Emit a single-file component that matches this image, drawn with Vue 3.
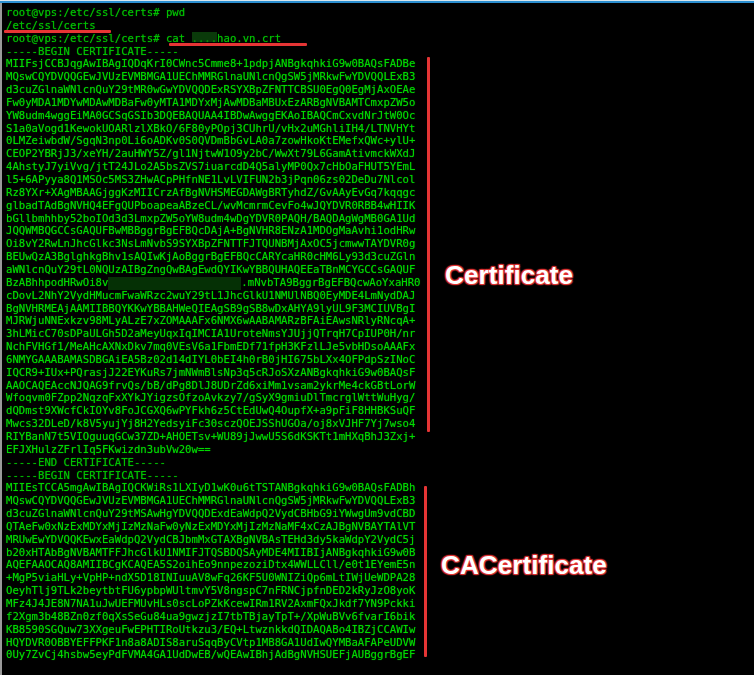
<script setup>
const before = [
  'MIIFsjCCBJqgAwIBAgIQDqKrI0CWnc5Cmme8+1pdpjANBgkqhkiG9w0BAQsFADBe',
  'MQswCQYDVQQGEwJVUzEVMBMGA1UEChMMRGlnaUNlcnQgSW5jMRkwFwYDVQQLExB3',
  'd3cuZGlnaWNlcnQuY29tMR0wGwYDVQQDExRSYXBpZFNTTCBSU0EgQ0EgMjAxOEAe',
  'Fw0yMDA1MDYwMDAwMDBaFw0yMTA1MDYxMjAwMDBaMBUxEzARBgNVBAMTCmxpZW5o',
  'YW8udm4wggEiMA0GCSqGSIb3DQEBAQUAA4IBDwAwggEKAoIBAQCmCxvdNrJtW0Oc',
  'S1a0aVogd1KewokUOARlzlXBkO/6F80yPOpj3CUhrU/vHx2uMGhliIH4/LTNVHYt',
  '0LMZeiwbdW/SgqN3np0Li6oADKv0S0QVDmBbGvLA0a7zowHkoKtEMefxQWc+ylU+',
  'CEOP2YBRjJ3/xeYH/2auHWY5Z/gl1NjtwW1O9y2bC/WwXt79L6GamAtivmckWXdJ',
  '4AhstyJ7yiVvg/jtT24JLo2A5bsZVS7iuarcdD4Q5alyMP0Qx7cHbOaFHUT5YEmL',
  'l5+6APyya8Q1MSOc5MS3ZHwACpPHfnNE1LvLVIFUN2b3jPqn06zs02DeDu7Nlcol',
  'Rz8YXr+XAgMBAAGjggKzMIICrzAfBgNVHSMEGDAWgBRTyhdZ/GvAAyEvGq7kqqgc',
  'glbadTAdBgNVHQ4EFgQUPboapeaABzeCL/wvMcmrmCevFo4wJQYDVR0RBB4wHIIK',
  'bGllbmhhby52boIOd3d3LmxpZW5oYW8udm4wDgYDVR0PAQH/BAQDAgWgMB0GA1Ud',
  'JQQWMBQGCCsGAQUFBwMBBggrBgEFBQcDAjA+BgNVHR8ENzA1MDOgMaAvhi1odHRw',
  'Oi8vY2RwLnJhcGlkc3NsLmNvbS9SYXBpZFNTTFJTQUNBMjAxOC5jcmwwTAYDVR0g',
  'BEUwQzA3BglghkgBhv1sAQIwKjAoBggrBgEFBQcCARYcaHR0cHM6Ly93d3cuZGln',
  'aWNlcnQuY29tL0NQUzAIBgZngQwBAgEwdQYIKwYBBQUHAQEEaTBnMCYGCCsGAQUF',
]
const after = [
  'cDovL2NhY2VydHMucmFwaWRzc2wuY29tL1JhcGlkU1NMUlNBQ0EyMDE4LmNydDAJ',
  'BgNVHRMEAjAAMIIBBQYKKwYBBAHWeQIEAgSB9gSB8wDxAHYA9lyUL9F3MCIUVBgI',
  'MJRWjuNNExkzv98MLyALzE7xZOMAAAFx6NMX6wAABAMARzBFAiEAwsNRlyRNcqA+',
  '3hLMicC70sDPaULGh5D2aMeyUqxIqIMCIA1UroteNmsYJUjjQTrqH7CpIUP0H/nr',
  'NchFVHGf1/MeAHcAXNxDkv7mq0VEsV6a1FbmEDf71fpH3KFzlLJe5vbHDsoAAAFx',
  '6NMYGAAABAMASDBGAiEA5Bz02d14dIYL0bEI4h0rB0jHI675bLXx4OFPdpSzINoC',
  'IQCR9+IUx+PQrasjJ22EYKuRs7jmNWmBlsNp3q5cRJoSXzANBgkqhkiG9w0BAQsF',
  'AAOCAQEAccNJQAG9frvQs/bB/dPg8DlJ8UDrZd6xiMm1vsam2ykrMe4ckGBtLorW',
  'Wfoqvm0FZpp2NqzqFxXYkJYigzsOfzoAvkzy7/gSyX9gmiuDlTmcrglWttWuHyg/',
  'dQDmst9XWcfCkIOYv8FoJCGXQ6wPYFkh6z5CtEdUwQ4OupfX+a9pFiF8HHBKSuQF',
  'Mwcs32DLeD/k8V5yujYj8H2YedsyiFc30sczQOEJSShUGOa/oj8xVJHF7Yj7wso4',
  'RIYBanN7t5VIOguuqGCw37ZD+AHOETsv+WU89jJwwU5S6dKSKTt1mHXqBhJ3Zxj+',
  'EFJXHulzZFrlIq5FKwizdn3ubVw20w==',
  '-----END CERTIFICATE-----',
  '-----BEGIN CERTIFICATE-----',
  'MIIEsTCCA5mgAwIBAgIQCKWiRs1LXIyD1wK0u6tTSTANBgkqhkiG9w0BAQsFADBh',
  'MQswCQYDVQQGEwJVUzEVMBMGA1UEChMMRGlnaUNlcnQgSW5jMRkwFwYDVQQLExB3',
  'd3cuZGlnaWNlcnQuY29tMSAwHgYDVQQDExdEaWdpQ2VydCBHbG9iYWwgUm9vdCBD',
  'QTAeFw0xNzExMDYxMjIzMzNaFw0yNzExMDYxMjIzMzNaMF4xCzAJBgNVBAYTAlVT',
  'MRUwEwYDVQQKEwxEaWdpQ2VydCBJbmMxGTAXBgNVBAsTEHd3dy5kaWdpY2VydC5j',
  'b20xHTAbBgNVBAMTFFJhcGlkU1NMIFJTQSBDQSAyMDE4MIIBIjANBgkqhkiG9w0B',
  'AQEFAAOCAQ8AMIIBCgKCAQEA5S2oihEo9nnpezoziDtx4WWLLCll/e0t1EYemE5n',
  '+MgP5viaHLy+VpHP+ndX5D18INIuuAV8wFq26KF5U0WNIZiQp6mLtIWjUeWDPA28',
  'OeyhTlj9TLk2beytbtFU6ypbpWUltmvY5V8ngspC7nFRNCjpfnDED2kRyJzO8yoK',
  'MFz4J4JE8N7NA1uJwUEFMUvHLs0scLoPZkKcewIRm1RV2AxmFQxJkdf7YN9Pckki',
  'f2Xgm3b48BZn0zf0qXsSeGu84ua9gwzjzI7tbTBjayTpT+/XpWuBVv6fvarI6bik',
  'KB8590SGQuw73XXgeuFwEPHTIRoUtkzu3/EQ+LtwznkkdQIDAQABo4IBZjCCAWIw',
  'HQYDVR0OBBYEFFPKF1n8a8ADIS8aruSqqByCVtp1MB8GA1UdIwQYMBaAFAPeUDVW',
  '0Uy7ZvCj4hsbw5eyPdFVMA4GA1UdDwEB/wQEAwIBhjAdBgNVHSUEFjAUBggrBgEF',
]
</script>

<template>
  <div class="page">
    <div class="topbar"></div>
    <div class="term">
      <div class="lines">
        <div class="line">root@vps:/etc/ssl/certs# pwd</div>
        <div class="line">/etc/ssl/certs</div>
        <div class="line">root@vps:/etc/ssl/certs# cat <span class="smudge-a">....</span>hao.vn.crt</div>
        <div class="line">-----BEGIN CERTIFICATE-----</div>
        <div v-for="l in before" :key="l" class="line cert">{{ l }}</div>
        <div class="line cert">BzABhhpodHRwOi8v<span class="smudge-b"></span>.mNvbTA9BggrBgEFBQcwAoYxaHR0</div>
        <div v-for="(l, i) in after" :key="i" class="line cert" :class="{ dim: l.startsWith('-----') }">{{ l }}</div>
      </div>
    </div>
    <i class="mark mark-pwd"></i>
    <i class="mark mark-cat"></i>
    <i class="bar bar-cert"></i>
    <i class="bar bar-ca"></i>
    <span class="label label-cert">Certificate</span>
    <span class="label label-ca">CACertificate</span>
  </div>
</template>

<style>
html, body { margin: 0; background: #000; }
</style>

<style scoped>
.page {
  position: relative;
  width: 754px;
  height: 675px;
  overflow: hidden;
  background: #000;
  display: flex;
  flex-direction: column;
}
.topbar {
  height: 3px;
  flex: none;
  background: linear-gradient(#d8e6ee 0 1px, #2c8fd0 1px 3px);
}
.term {
  flex: 1;
  border-left: 2px solid #9a9a9a;
  padding: 4px 0 0 4px;
}
.lines {
  filter: blur(0.3px);
  font-family: "DejaVu Sans Mono", monospace;
  font-size: 10.63px;
  line-height: 12.84px;
  white-space: pre;
  color: #00c000;
  text-shadow: 0 0 1px rgba(0, 200, 0, 0.7);
}
.cert { color: #00d800; }
.cert.dim { color: #00c000; }
.smudge-a {
  background: linear-gradient(#0a3a0a 0 75%, transparent 75%);
  color: #0a8a0a;
}
.smudge-b {
  background: #053005;
  display: inline-block;
  width: 133px;
  height: 13px;
  vertical-align: top;
}
.mark, .bar { position: absolute; background: #e53535; border-radius: 1px; }
.mark { height: 3px; }
.mark-pwd { left: 4px; top: 30px; width: 107px; }
.mark-cat { left: 169px; top: 43px; width: 138px; }
.bar { width: 3px; }
.bar-cert { left: 427px; top: 57px; height: 375px; }
.bar-ca { left: 424px; top: 486px; height: 171px; }
.label {
  position: absolute;
  font-family: "Liberation Sans", Arial, sans-serif;
  font-weight: 700;
  font-size: 26.2px;
  color: #fff;
  white-space: nowrap;
  text-shadow: 0 0 2px #e53535, 1px 1px 1px #e53535, -1px -1px 1px #e53535, 1px -1px 1px #e53535, -1px 1px 1px #e53535;
}
.label-cert { left: 445px; top: 260px; }
.label-ca { left: 441px; top: 550px; }
</style>
